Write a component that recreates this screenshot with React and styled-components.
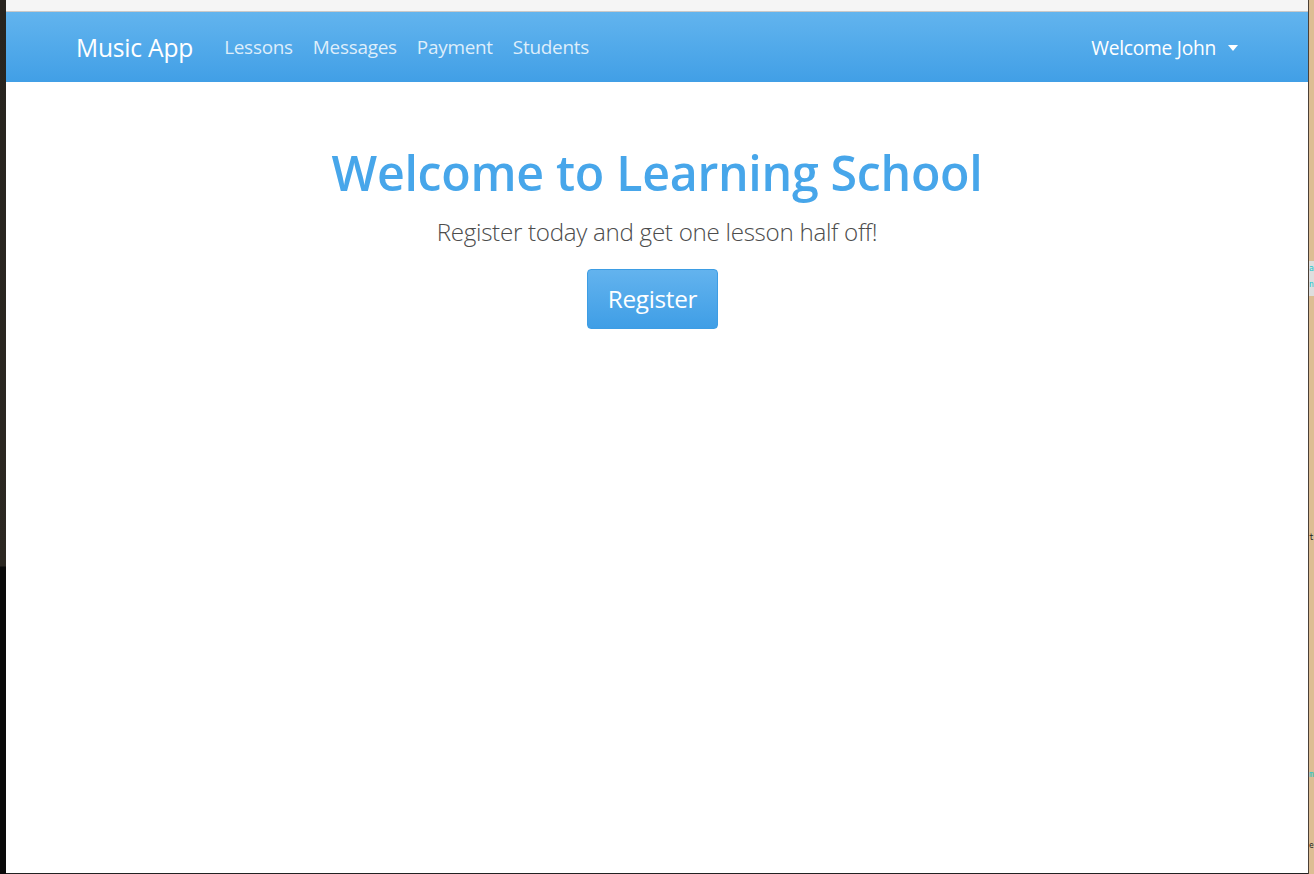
import React from "react";
import styled, { createGlobalStyle } from "styled-components";

const Global = createGlobalStyle`
  html, body { margin: 0; padding: 0; overflow: hidden; }
  body { font-family: "Open Sans", "Noto Sans", sans-serif; }
  * { box-sizing: border-box; }
`;

const Desktop = styled.div`
  width: 1314px;
  height: 874px;
  display: grid;
  grid-template-columns: 6px 1fr 6px;
  background: #0b0b0b;
`;

const LeftEdge = styled.div`
  background: linear-gradient(#27241f 0, #2c2822 566px, #0a0a0a 567px, #0a0a0a 100%);
`;

const RightEdge = styled.div`
  position: relative;
  background: #dcbd93;
  border-left: 1px solid #4a4038;
`;

const EdgeChip = styled.span`
  position: absolute;
  left: 0;
  top: ${(p) => p.$top}px;
  width: 5px;
  height: ${(p) => p.$h}px;
  background: ${(p) => p.$bg || "transparent"};
  color: ${(p) => p.$color || "#1bc6cc"};
  font: 8px "DejaVu Sans Mono", monospace;
  line-height: ${(p) => p.$lh || 12}px;
  white-space: pre;
`;

const Window = styled.div`
  display: flex;
  flex-direction: column;
  background: #fff;
  border-bottom: 1px solid #222;
`;

const TopStrip = styled.div`
  height: 12px;
  background: #f5f5f5;
  border-bottom: 1px solid #c9c9c9;
`;

const Navbar = styled.nav`
  height: 70px;
  background: linear-gradient(#62b4ee, #419fe6);
  display: flex;
  justify-content: center;
`;

const NavContainer = styled.div`
  width: 1200px;
  padding: 0 9px 0 19px;
  display: flex;
  align-items: center;
`;

const Brand = styled.a`
  font-size: 24.6px;
  color: #fff;
  text-decoration: none;
  margin-right: 21px;
  letter-spacing: -0.2px;
`;

const NavList = styled.div`
  display: flex;
  align-items: center;
  flex: 1;
`;

const NavLink = styled.a`
  font-size: ${(p) => (p.$strong ? "19.2px" : "18.9px")};
  padding: 0 10px;
  color: ${(p) => (p.$strong ? "#fff" : "rgba(255,255,255,0.82)")};
  text-decoration: none;
  display: flex;
  align-items: center;
  gap: 10px;
  letter-spacing: -0.25px;
`;

const Caret = styled.span`
  width: 0;
  height: 0;
  border-left: 5.5px solid transparent;
  border-right: 5.5px solid transparent;
  border-top: 6px solid #fff;
  margin-left: 2px;
  margin-top: 1px;
`;

const Main = styled.main`
  flex: 1;
  display: flex;
  flex-direction: column;
  align-items: center;
  padding-top: 62px;
`;

const Title = styled.h1`
  margin: 0;
  font-size: 48.3px;
  font-weight: 600;
  color: #47a6ea;
  line-height: 1.2;
  letter-spacing: -0.3px;
`;

const Lead = styled.p`
  margin: 13px 0 0;
  font-size: 24.2px;
  font-weight: 300;
  color: #4c4c4c;
  letter-spacing: -0.3px;
`;

const Button = styled.button`
  margin: 21px 9px 0 0;
  width: 131px;
  height: 60px;
  border: 1px solid #3d9de4;
  border-radius: 4px;
  background: linear-gradient(#63b3ee, #3f9ee6);
  color: #fff;
  font-family: inherit;
  font-size: 24.3px;
  letter-spacing: -0.3px;
  cursor: pointer;
`;

export default function App() {
  return (
    <>
      <Global />
      <Desktop>
        <LeftEdge />
        <Window>
          <TopStrip />
          <Navbar>
            <NavContainer>
              <Brand href="#">Music App</Brand>
              <NavList>
                <NavLink href="#">Lessons</NavLink>
                <NavLink href="#">Messages</NavLink>
                <NavLink href="#">Payment</NavLink>
                <NavLink href="#">Students</NavLink>
              </NavList>
              <NavLink href="#" $strong>
                Welcome John <Caret />
              </NavLink>
            </NavContainer>
          </Navbar>
          <Main>
            <Title>Welcome to Learning School</Title>
            <Lead>Register today and get one lesson half off!</Lead>
            <Button>Register</Button>
          </Main>
        </Window>
        <RightEdge>
          <EdgeChip $top={261} $h={35} $bg="#dedede" $lh={16}>{"a\nn"}</EdgeChip>
          <EdgeChip $top={532} $h={12} $color="#222">t</EdgeChip>
          <EdgeChip $top={769} $h={12}>m</EdgeChip>
          <EdgeChip $top={840} $h={12} $color="#222">e</EdgeChip>
        </RightEdge>
      </Desktop>
    </>
  );
}
